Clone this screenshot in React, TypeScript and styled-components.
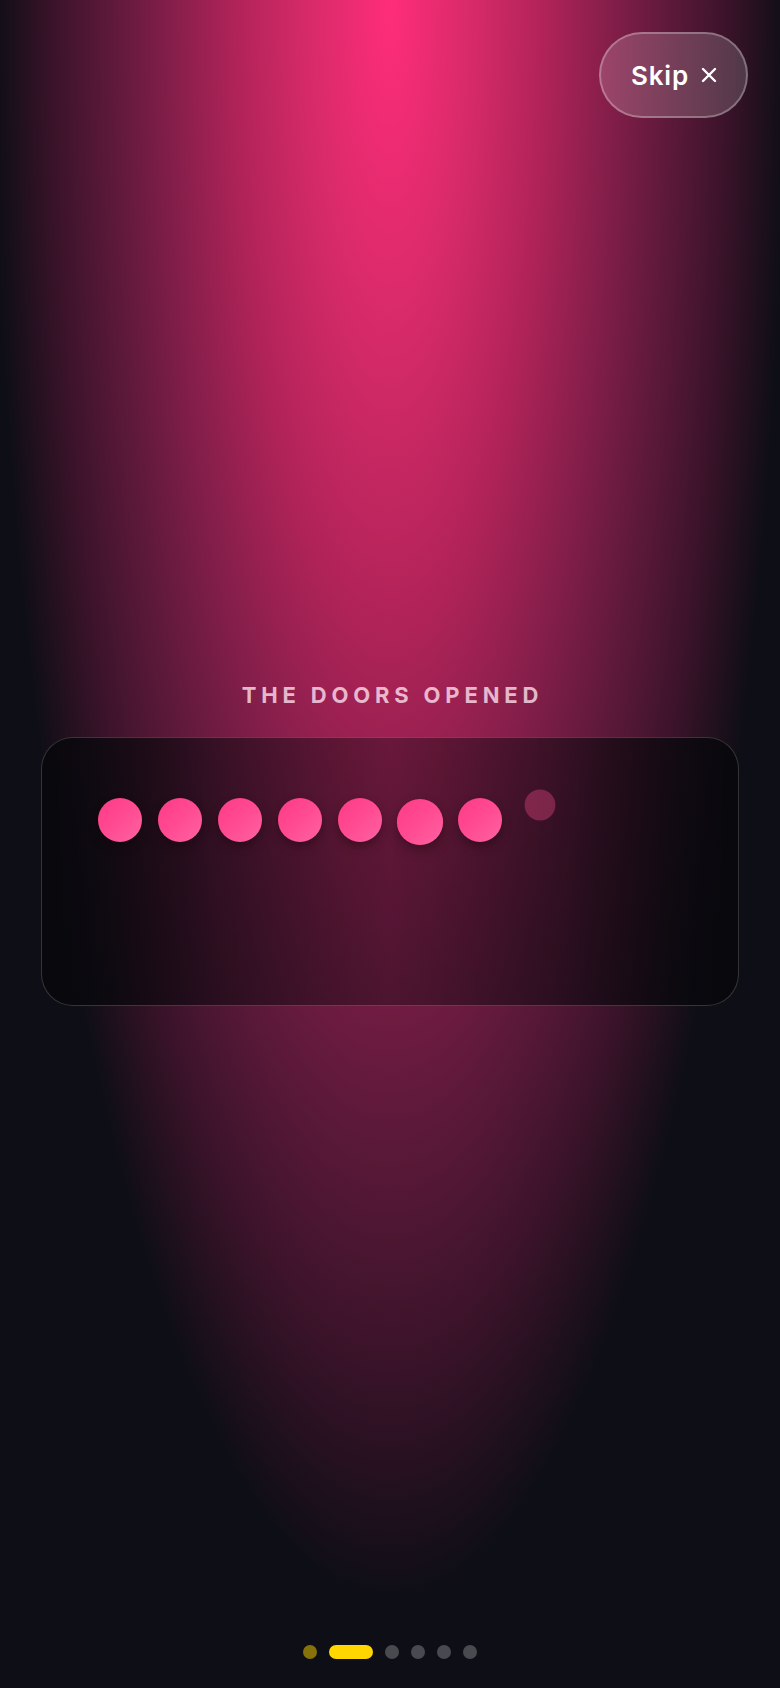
import styled, { createGlobalStyle } from 'styled-components';

const GlobalStyle = createGlobalStyle`
  html, body {
    margin: 0;
    padding: 0;
    background: #0d0e16;
  }
  * {
    box-sizing: border-box;
  }
`;

const STEPS = 6;
const ACTIVE_STEP = 1;

const dots = [
  { scale: 1, lift: 0, faded: false },
  { scale: 1, lift: 0, faded: false },
  { scale: 1, lift: 0, faded: false },
  { scale: 1, lift: 0, faded: false },
  { scale: 1, lift: 0, faded: false },
  { scale: 1.05, lift: 2, faded: false },
  { scale: 1, lift: 0, faded: false },
  { scale: 0.7, lift: -15, faded: true },
];

const App = () => {
  return (
    <>
      <GlobalStyle />
      <Page>
        <TopBar>
          <SkipButton type="button">
            Skip
            <svg width="16" height="16" viewBox="0 0 16 16" fill="none">
              <path d="M2 2L14 14M14 2L2 14" stroke="currentColor" strokeWidth="2.4" strokeLinecap="round" />
            </svg>
          </SkipButton>
        </TopBar>

        <Content>
          <Title>The doors opened</Title>
          <Card>
            <DotRow>
              {dots.map((d, i) => (
                <Dot key={i} $scale={d.scale} $lift={d.lift} $faded={d.faded} />
              ))}
            </DotRow>
          </Card>
        </Content>

        <Pager>
          {Array.from({ length: STEPS }).map((_, i) => (
            <PagerDot key={i} $state={i < ACTIVE_STEP ? 'done' : i === ACTIVE_STEP ? 'active' : 'todo'} />
          ))}
        </Pager>
      </Page>
    </>
  );
};

const Page = styled.div`
  width: 780px;
  height: 1688px;
  display: flex;
  flex-direction: column;
  background:
    radial-gradient(
      ellipse 51% 95% at 50% 0%,
      #ff2d7a 0%,
      #d42a67 22%,
      #b02358 39%,
      #8a1f4c 53%,
      #631a3c 68%,
      #3a1329 85%,
      rgba(13, 14, 22, 0) 100%
    ),
    #0d0e16;
  font-family: Inter, "Noto Sans", sans-serif;
  overflow: hidden;
`;

const TopBar = styled.header`
  display: flex;
  justify-content: flex-end;
  padding: 32px 32px 0;
`;

const SkipButton = styled.button`
  display: flex;
  align-items: center;
  gap: 12px;
  height: 86px;
  padding: 0 29px 0 30px;
  border-radius: 43px;
  border: 2px solid rgba(255, 255, 255, 0.28);
  background: rgba(255, 255, 255, 0.17);
  color: #ffffff;
  font-family: Inter, "Noto Sans", sans-serif;
  font-size: 26px;
  font-weight: 600;
  letter-spacing: 0.8px;
  cursor: pointer;
`;

const Content = styled.main`
  flex: 1;
  display: flex;
  flex-direction: column;
  align-items: center;
  padding: 563px 41px 0;
  gap: 28px;
`;

const Title = styled.h1`
  margin: 0;
  font-size: 22px;
  line-height: 28px;
  font-weight: 700;
  letter-spacing: 0.22em;
  text-indent: 0.22em;
  text-transform: uppercase;
  color: rgba(255, 226, 240, 0.78);
`;

const Card = styled.section`
  width: 100%;
  height: 269px;
  border-radius: 32px;
  border: 1.5px solid rgba(255, 255, 255, 0.18);
  background: linear-gradient(
    90deg,
    rgba(8, 8, 12, 0.9) 0%,
    rgba(10, 8, 14, 0.55) 25%,
    rgba(10, 8, 14, 0.35) 50%,
    rgba(10, 8, 14, 0.55) 75%,
    rgba(8, 8, 12, 0.9) 100%
  );
  padding: 60px 56px;
`;

const DotRow = styled.div`
  display: flex;
  gap: 16px;
`;

const Dot = styled.span<{ $scale: number; $lift: number; $faded: boolean }>`
  width: 44px;
  height: 44px;
  border-radius: 50%;
  flex-shrink: 0;
  transform: translateY(${p => p.$lift}px) scale(${p => p.$scale});
  background: ${p =>
    p.$faded
      ? 'rgba(255, 80, 145, 0.34)'
      : 'linear-gradient(135deg, #ff3a86 0%, #ff4b92 50%, #ff63a3 100%)'};
  box-shadow: ${p => (p.$faded ? 'none' : '0 5px 10px rgba(20, 0, 10, 0.35)')};
`;

const Pager = styled.nav`
  display: flex;
  justify-content: center;
  align-items: center;
  gap: 12px;
  padding-bottom: 29px;
`;

const PagerDot = styled.span<{ $state: 'done' | 'active' | 'todo' }>`
  height: 14px;
  width: ${p => (p.$state === 'active' ? '44px' : '14px')};
  border-radius: 7px;
  background: ${p =>
    p.$state === 'active' ? '#ffd600' : p.$state === 'done' ? 'rgba(255, 214, 0, 0.5)' : 'rgba(255, 255, 255, 0.25)'};
`;

export default App;
